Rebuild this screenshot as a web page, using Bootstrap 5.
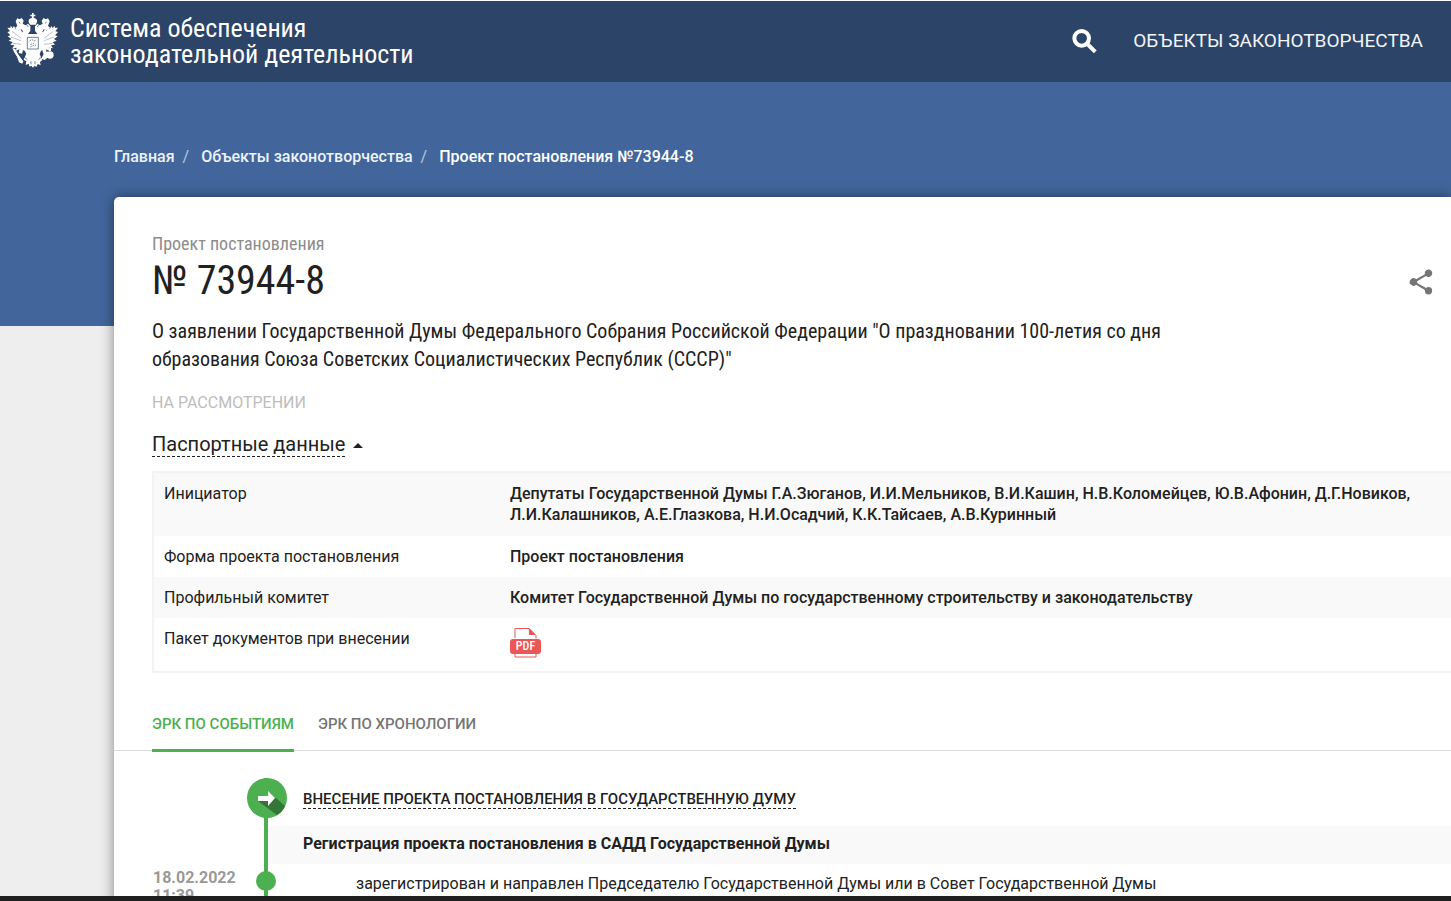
<!DOCTYPE html>
<html lang="ru">
<head>
<meta charset="utf-8">
<meta name="viewport" content="width=device-width, initial-scale=1">
<title>Проект постановления №73944-8</title>
<link rel="stylesheet" href="https://cdn.jsdelivr.net/npm/bootstrap@5.3.0/dist/css/bootstrap.min.css">
<style>
  body { font-family: Roboto, "Open Sans", sans-serif; font-size: 16px; line-height: 21px; color: #212121; background: #eee; }
  a { color: inherit; text-decoration: none; }
  a:hover { color: inherit; }
  .condensed { font-family: "Roboto Condensed", Roboto, sans-serif; }
  .site-header { background: #2c4467; border-top: 1px solid #fff; height: 82px; padding: 0 28px 2px 6px; }
  .site-name { font-size: 26px; line-height: 26px; }
  .main-menu { font-size: 19px; color: #f1f4f8; }
  .page-body { background: linear-gradient(#42669c 244px, #eeeeee 244px); padding: 64px 0 0 114px; }
  .crumbs { --bs-breadcrumb-divider-color: #b9c7dd; --bs-breadcrumb-item-padding-x: 8px; font-weight: 500; color: #eef2f8; margin-bottom: 30px; }
  .crumbs .breadcrumb-item + .breadcrumb-item::before { padding-right: 12px; font-weight: 400; }
  .crumbs .active { color: #fff; }
  .sheet { background: #fff; border-top-left-radius: 5px; box-shadow: 0 0 14px rgba(0, 0, 0, .45); padding-top: 34px; }
  .inset { padding-left: 38px; }
  .doc-kind { font-size: 18px; line-height: 26px; color: #8c8c8c; }
  .doc-number { font-size: 40px; line-height: 48px; margin-bottom: 12px; }
  .doc-title { font-size: 20px; line-height: 28px; max-width: 1060px; margin-bottom: 19px; }
  .doc-status { font-size: 16px; color: #bdbdbd; margin-bottom: 20px; }
  .share { padding: 16px 15px 0 0; }
  .dashed { border-bottom: 1px dashed #212121; }
  .toggle { background: none; border: 0; padding: 0; color: inherit; font-size: 20px; line-height: 23px; margin-bottom: 14px; }
  .passport { border: 2px solid #f3f3f3; border-right: 0; margin-bottom: 41px; --bs-table-striped-bg: #f9f9f9; --bs-table-striped-color: #212121; --bs-table-color: #212121; }
  .passport th, .passport td { padding: 10px; border: 0; }
  .passport tr:first-child td { padding-bottom: 11px; }
  .passport th { width: 347px; font-weight: 400; }
  .passport td { font-weight: 500; }
  .event-tabs { border-bottom: 1px solid #dcdcdc; gap: 24px; font-size: 15px; font-weight: 500; }
  .event-tabs .nav-link { color: #757575; padding: 0 0 14px; border-bottom: 3px solid transparent; margin-bottom: -2px; }
  .event-tabs .nav-link.active { color: #4caf50; border-color: #4caf50; }
  .timeline { padding-top: 27px; }
  .when { width: 95px; flex: none; color: #999; font-weight: 700; line-height: 18px; padding: 5px 0 0 1px; }
  .rail { width: 21px; flex: none; border-right: 4px solid #4caf50; }
  .stage-icon { position: absolute; left: 0; top: 0; }
  .dot { position: absolute; left: 9px; top: 7px; width: 20px; height: 20px; background: #4caf50; }
  .stage { height: 48px; font-size: 15px; font-weight: 500; padding: 11px 0 0 35px; }
  .step { background: #f9f9f9; font-weight: 700; padding: 7px 0 10px 35px; }
  .result { padding: 9px 0 30px 88px; }
  .bottom-strip { height: 5px; background: #1f1f1f; flex: none; }
</style>
</head>
<body class="vh-100 d-flex flex-column overflow-hidden">
<header class="site-header d-flex align-items-center justify-content-between flex-shrink-0 text-white">
  <a href="#" class="d-flex align-items-center gap-2">
    <svg width="56" height="58" viewBox="18 34 168 174" fill="#fff" aria-hidden="true">
      <path d="M91 42h5v-5h5v5h5v5h-5v4q12 3 10 13l-4 8h-17l-4-8q-2-10 10-13v-4h-5z"/>
      <path d="M47 62l5-9 7 3 6-4 6 8-3 9 8 5 8-5 7 8v14l-8 10-12-4-6-11-9 3-11-7 7-6z"/>
      <path d="M149 62l-5-9-7 3-6-4-6 8 3 9-8 5-8-5-7 8v14l8 10 12-4 6-11 9 3 11-7-7-6z"/>
      <path d="M24 78l7 4 1-7 6 7 4-6 5 10 4-6 5 10 5-5 6 10 9-2 10 10v36l-6 12-11-2-3 10-10-2 2-11-11 5 3-10-13 2 6-9-12-2 7-7-12-5 8-5-11-8 8-3-9-10 8-2-8-11 8 1z"/>
      <path d="M172 78l-7 4-1-7-6 7-4-6-5 10-4-6-5 10-5-5-6 10-9-2-10 10v36l6 12 11-2 3 10 10-2-2-11 11 5-3-10 13 2-6-9 12-2-7-7 12-5-8-5 11-8-8-3 9-10-8-2 8-11-8 1z"/>
      <path d="M76 100h45l6 43-10 20-18 13-18-13-11-20z"/>
      <path d="M80 156l10 8h17l10-8 10 22-7 6 2 10-9-4-4 9-5-4-5 6-5-6-5 3-3-9-9 4 2-11-8-5z"/>
      <path d="M37 142l9 3 8 15 9 13 7 9-3 7-10-4-6-17-9-14z"/>
      <circle cx="150" cy="163" r="11"/><path d="M147 151h6v-9h-6zM132 158l12-6v18l-10 8-10-4z"/>
      <g fill="none" stroke="#2c4467" stroke-width="2">
        <path d="M82 110h33v35H82z"/>
        <path stroke-dasharray="5 3" d="M89 121l6-5 7 5 5-2M91 132l9-4 8 7M91 139l8-5 6 4"/>
        <path stroke-width="1" d="M36 92l28 21M33 109l30 11M38 128l26 3M160 92l-28 21M163 109l-30 11M158 128l-26 3"/>
        <path d="M78 69l7 10M119 69l-7 10M57 63l3 6M139 63l-3 6M73 170l9 7M124 170l-9 7M93 182v9M105 182v9"/>
      </g>
    </svg>
    <span class="site-name condensed">Система обеспечения<br>законодательной деятельности</span>
  </a>
  <nav class="main-menu d-flex align-items-center">
    <a href="#" aria-label="Поиск" class="me-4 pe-2">
      <svg width="32" height="32" viewBox="0 0 24 24" fill="none" stroke="#fff" stroke-width="3"><circle cx="9.500" cy="10" r="5.500"/><path d="M13.500 14l6.200 6.200"/></svg>
    </a>
    <a href="#">ОБЪЕКТЫ ЗАКОНОТВОРЧЕСТВА</a>
  </nav>
</header>

<main class="page-body flex-grow-1 overflow-hidden">
  <nav aria-label="breadcrumb">
    <ol class="breadcrumb crumbs">
      <li class="breadcrumb-item"><a href="#">Главная</a></li>
      <li class="breadcrumb-item"><a href="#">Объекты законотворчества</a></li>
      <li class="breadcrumb-item active" aria-current="page">Проект постановления №73944-8</li>
    </ol>
  </nav>

  <article class="sheet">
    <div class="inset">
      <div class="d-flex justify-content-between align-items-center">
        <div class="condensed">
          <div class="doc-kind">Проект постановления</div>
          <h1 class="doc-number fw-normal">№ 73944-8</h1>
        </div>
        <a href="#" aria-label="Поделиться" class="share">
          <svg width="30" height="30" viewBox="0 0 24 24" fill="#757575"><path d="M18 16.080c-.76 0-1.440.3-1.960.77L8.910 12.700c.05-.23.09-.46.09-.7s-.04-.47-.09-.7l7.050-4.110A3 3 0 1 0 15 5c0 .24.04.47.09.7L8.040 9.810a3 3 0 1 0 0 4.380l7.120 4.160c-.05.21-.08.43-.08.65a2.920 2.920 0 1 0 2.920-2.920z"/></svg>
        </a>
      </div>
      <p class="doc-title condensed">О заявлении Государственной Думы Федерального Собрания Российской Федерации "О праздновании 100-летия со дня образования Союза Советских Социалистических Республик (СССР)"</p>
      <div class="doc-status">НА РАССМОТРЕНИИ</div>
      <button type="button" class="toggle d-flex align-items-center gap-2" aria-expanded="true">
        <span class="dashed">Паспортные данные</span>
        <svg width="10" height="5" viewBox="0 0 10 5" fill="#212121"><path d="M0 5l5-5 5 5z"/></svg>
      </button>
      <table class="table table-striped passport">
        <tbody>
          <tr><th scope="row">Инициатор</th><td>Депутаты Государственной Думы Г.А.Зюганов, И.И.Мельников, В.И.Кашин, Н.В.Коломейцев, Ю.В.Афонин, Д.Г.Новиков,<br>Л.И.Калашников, А.Е.Глазкова, Н.И.Осадчий, К.К.Тайсаев, А.В.Куринный</td></tr>
          <tr><th scope="row">Форма проекта постановления</th><td>Проект постановления</td></tr>
          <tr><th scope="row">Профильный комитет</th><td>Комитет Государственной Думы по государственному строительству и законодательству</td></tr>
          <tr><th scope="row">Пакет документов при внесении</th><td>
            <a href="#" aria-label="Скачать PDF"><svg class="d-block" width="31" height="33" viewBox="0 1 31 33">
              <path d="M5 11V1.500h14l7 7v3M5 26v4h21v-4" fill="none" stroke="#eb5757" stroke-width="1"/>
              <path d="M19 1l7 7h-7z" fill="#eb5757"/><rect y="12" width="31" height="15" rx="3" fill="#eb5757"/>
              <text x="15.500" y="23" text-anchor="middle" font-family="Roboto Condensed" font-size="12" font-weight="500" fill="#fff">PDF</text>
            </svg></a></td></tr>
        </tbody>
      </table>
    </div>

    <ul class="nav event-tabs inset">
      <li class="nav-item"><a class="nav-link active" href="#" aria-current="true">ЭРК ПО СОБЫТИЯМ</a></li>
      <li class="nav-item"><a class="nav-link" href="#">ЭРК ПО ХРОНОЛОГИИ</a></li>
    </ul>

    <section class="timeline inset">
      <div class="d-flex">
        <div class="when"></div>
        <div class="rail position-relative">
          <svg class="stage-icon" width="40" height="40" viewBox="0 0 40 40">
            <circle cx="20" cy="20" r="20" fill="#4caf50"/>
            <path d="M11 23l18-3 9 8a20 20 0 0 1-8 9z" fill="#337638"/>
            <path d="M11 18h10v-5l7 7-7 8v-5H11z" fill="#fff"/>
          </svg>
        </div>
        <div class="stage flex-grow-1"><a href="#" class="dashed">ВНЕСЕНИЕ ПРОЕКТА ПОСТАНОВЛЕНИЯ В ГОСУДАРСТВЕННУЮ ДУМУ</a></div>
      </div>
      <div class="d-flex">
        <div class="when"></div>
        <div class="rail"></div>
        <div class="step flex-grow-1">Регистрация проекта постановления в САДД Государственной Думы</div>
      </div>
      <div class="d-flex">
        <div class="when">18.02.2022<br>11:39</div>
        <div class="rail position-relative"><span class="dot rounded-circle"></span></div>
        <div class="result flex-grow-1">зарегистрирован и направлен Председателю Государственной Думы или в Совет Государственной Думы</div>
      </div>
    </section>
  </article>
</main>
<div class="bottom-strip"></div>
<script src="https://cdn.jsdelivr.net/npm/bootstrap@5.3.0/dist/js/bootstrap.bundle.min.js"></script>
</body>
</html>
